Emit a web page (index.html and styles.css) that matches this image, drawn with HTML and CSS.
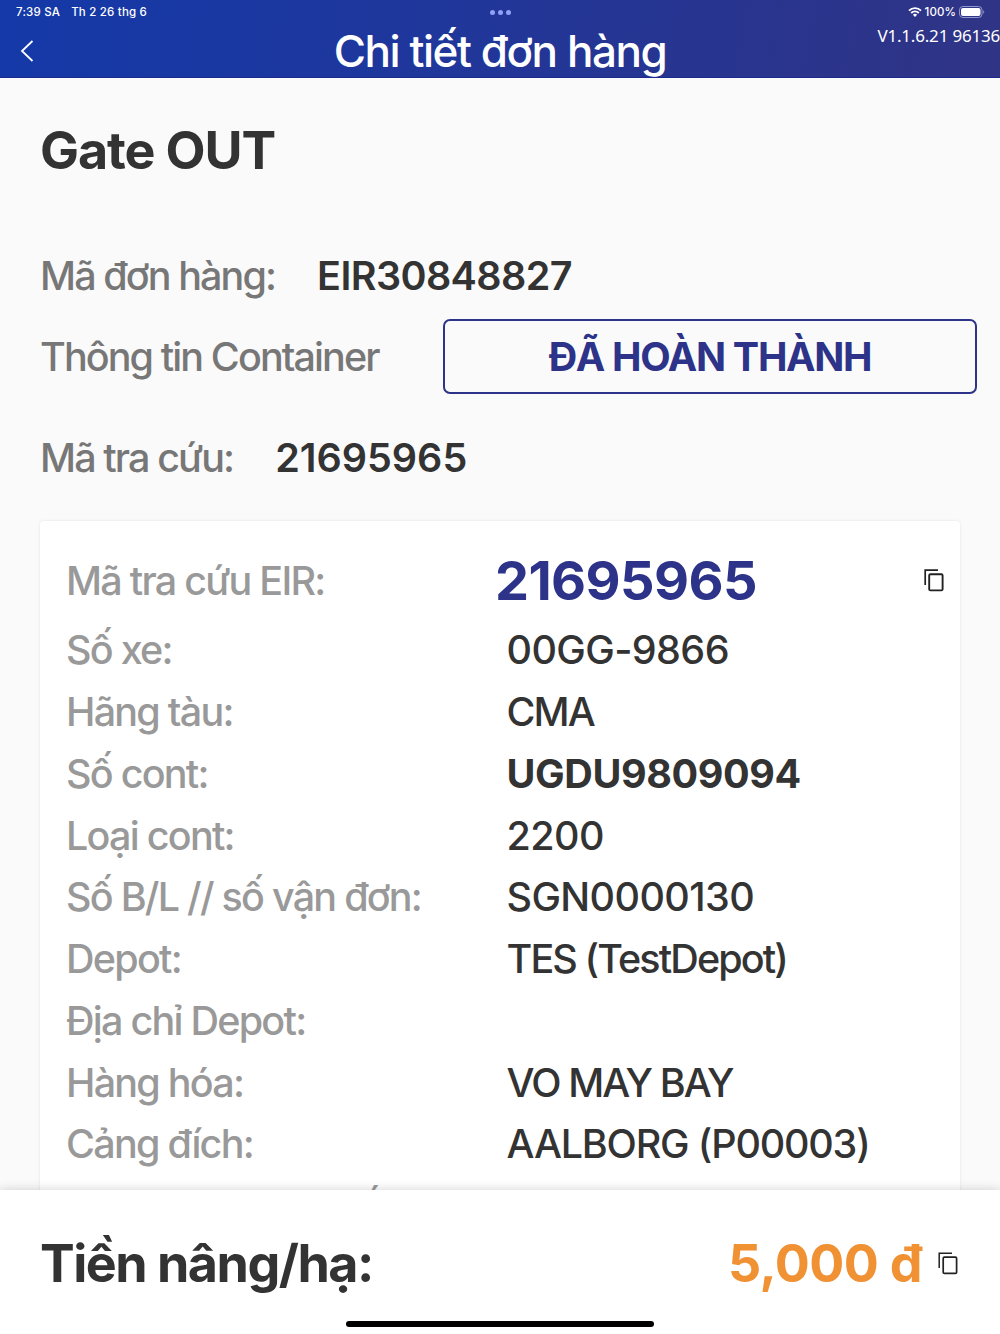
FILE: index.html
```html
<!DOCTYPE html>
<html lang="vi">
<head>
    <meta charset="UTF-8">
    <meta name="viewport" content="width=device-width, initial-scale=1.0">
    <title>Chi tiết đơn hàng</title>
    <link rel="stylesheet" href="styles.css">
</head>
<body>
    <header>
        <div class="status-bar">
            <div class="status-left">
                <span>7:39 SA</span>
                <span>Th 2 26 thg 6</span>
            </div>
            <div class="dots"><i></i><i></i><i></i></div>
            <div class="status-right">
                <svg class="wifi" viewBox="0 0 14 10" width="14" height="10">
                    <path d="M1 3.7a8.4 8.4 0 0 1 12 0M3.2 6a5.3 5.3 0 0 1 7.6 0" fill="none" stroke="#fff" stroke-width="1.8"/>
                    <path d="M4.9 7.7a3 3 0 0 1 4.2 0L7 9.9z" fill="#fff"/>
                </svg>
                <span class="percent">100%</span>
                <svg class="battery" viewBox="0 0 26 12" width="26" height="12">
                    <rect x=".5" y=".5" width="22.5" height="11" rx="3.4" fill="none" stroke="#8f96cc"/>
                    <rect x="2" y="2" width="19.5" height="8" rx="2" fill="#fff"/>
                    <path d="M24.2 4.2v3.6c1.4-.6 1.4-3 0-3.6z" fill="#8f96cc"/>
                </svg>
            </div>
        </div>
        <nav>
            <a href="#" class="back" aria-label="Quay lại">
                <svg viewBox="0 0 14 24" width="14" height="24">
                    <path d="M12.5 2L2 12l10.5 10" fill="none" stroke="#fff" stroke-width="1.8"/>
                </svg>
            </a>
            <h1>Chi tiết đơn hàng</h1>
            <span class="version">V1.1.6.21 96136</span>
        </nav>
    </header>

    <main>
        <h2>Gate OUT</h2>

        <div class="field order-code">
            <span class="label">Mã đơn hàng:</span>
            <strong>EIR30848827</strong>
        </div>
        <div class="field container-info">
            <span class="label">Thông tin Container</span>
            <button class="status-btn">ĐÃ HOÀN THÀNH</button>
        </div>
        <div class="field lookup-code">
            <span class="label">Mã tra cứu:</span>
            <strong>21695965</strong>
        </div>

        <section class="card">
            <div class="row row-main">
                <span class="key">Mã tra cứu EIR:</span>
                <span class="value">21695965</span>
                <svg class="copy" viewBox="0 0 20 23" width="20" height="23">
                    <path d="M1.2 16V1.2H14" fill="none" stroke="#222" stroke-width="1.7"/>
                    <rect x="5.2" y="5.2" width="13.4" height="16.2" rx="1.2" fill="none" stroke="#222" stroke-width="1.9"/>
                </svg>
            </div>
            <div class="row"><span class="key">Số xe:</span><span class="value">00GG-9866</span></div>
            <div class="row"><span class="key">Hãng tàu:</span><span class="value tight">CMA</span></div>
            <div class="row"><span class="key">Số cont:</span><span class="value bold">UGDU9809094</span></div>
            <div class="row"><span class="key">Loại cont:</span><span class="value">2200</span></div>
            <div class="row"><span class="key">Số B/L // số vận đơn:</span><span class="value">SGN0000130</span></div>
            <div class="row"><span class="key">Depot:</span><span class="value tight">TES (TestDepot)</span></div>
            <div class="row"><span class="key">Địa chỉ Depot:</span><span class="value"></span></div>
            <div class="row"><span class="key">Hàng hóa:</span><span class="value tight">VO MAY BAY</span></div>
            <div class="row"><span class="key">Cảng đích:</span><span class="value snug">AALBORG (P00003)</span></div>
            <div class="row"><span class="key">Ngày đăng ký cuối:</span><span class="value"></span></div>
        </section>
    </main>

    <footer>
        <div class="total">
            <span class="total-label">Tiền nâng/hạ:</span>
            <span class="price">5,000 đ</span>
            <svg class="copy" viewBox="0 0 20 23" width="20" height="23">
                <path d="M1.2 16V1.2H14" fill="none" stroke="#222" stroke-width="1.5"/>
                <rect x="5.2" y="5.2" width="13.4" height="16.2" rx="1.2" fill="none" stroke="#222" stroke-width="1.7"/>
            </svg>
        </div>
        <div class="home-bar"></div>
    </footer>
</body>
</html>
```

FILE: styles.css
```css
:root {
    --navy: #2c3389;
    --text: #333333;
    --muted: #777777;
    --light: #999999;
    --orange: #f09134;
}
* {
    box-sizing: border-box;
}
body {
    font-family: Inter, 'Liberation Sans', sans-serif;
    color: var(--text);
    background-color: #fafafa;
    margin: 0;
    height: 1334px;
    overflow: hidden;
    display: flex;
    flex-direction: column;
    white-space: nowrap;
}
header {
    flex: none;
    height: 78px;
    color: #fff;
    background: linear-gradient(100deg, #1439a8 0%, #1d379e 35%, #263592 65%, #303485 100%);
    border-bottom: 1px solid #1b2a8c;
}
.status-bar {
    display: grid;
    grid-template-columns: 1fr auto 1fr;
    align-items: center;
    height: 24px;
    padding: 0 15px 0 16px;
    font-size: 11.5px;
    font-weight: 500;
}
.status-left {
    display: flex;
    gap: 11px;
    letter-spacing: 0.2px;
}
.dots {
    display: flex;
    gap: 3px;
}
.dots i {
    width: 5px;
    height: 5px;
    border-radius: 50%;
    background: #8ea2f8;
}
.status-right {
    display: flex;
    justify-content: flex-end;
    align-items: center;
    gap: 3px;
}
.percent {
    letter-spacing: 0.1px;
}
nav {
    display: grid;
    grid-template-columns: 1fr auto 1fr;
    height: 53px;
}
.back {
    align-self: center;
    margin-left: 20px;
    height: 24px;
}
h1 {
    margin: 0;
    font-size: 44px;
    font-weight: 500;
    line-height: 54px;
    letter-spacing: -1.45px;
}
.version {
    justify-self: end;
    font-family: 'Noto Sans', sans-serif;
    font-size: 17px;
    line-height: 24px;
    letter-spacing: -0.2px;
}
main {
    flex: 1;
    min-height: 0;
    overflow: hidden;
    padding: 41px 40px 0;
}
h2 {
    margin: 0;
    font-size: 52px;
    font-weight: 700;
    line-height: 64px;
    letter-spacing: -1.1px;
}
.field {
    display: flex;
    align-items: center;
    font-size: 39.5px;
}
.field strong {
    font-weight: 600;
    letter-spacing: -0.6px;
    margin-left: 42px;
}
.label {
    color: var(--muted);
    font-weight: 450;
    letter-spacing: -1.9px;
}
.order-code {
    height: 60px;
    margin-top: 63px;
}
.container-info {
    height: 75px;
    margin-top: 13px;
    margin-right: -17px;
    justify-content: space-between;
}
.status-btn {
    width: 534px;
    height: 75px;
    padding: 0;
    border: 2px solid var(--navy);
    border-radius: 7px;
    background: none;
    color: var(--navy);
    font: 700 39.5px Inter, sans-serif;
    letter-spacing: -1.3px;
}
.lookup-code {
    height: 60px;
    margin-top: 34px;
}
.lookup-code strong {
    letter-spacing: 0;
}
.card {
    margin-top: 33px;
    padding: 21px 16px 0 26px;
    background: #fff;
    border-radius: 4px;
    box-shadow: 0 0 3px rgba(0,0,0,0.1);
}
.row {
    display: grid;
    grid-template-columns: 440.5px 1fr auto;
    align-items: center;
    height: 61.75px;
    font-size: 39.5px;
}
.row-main {
    grid-template-columns: 429px 1fr auto;
    height: 76px;
    margin-bottom: 1.5px;
}
.row-main .key {
    padding-top: 2px;
}
.row:last-child {
    padding-top: 4px;
}
.key {
    color: var(--light);
    font-weight: 500;
    letter-spacing: -1.75px;
}
.value {
    font-weight: 450;
    letter-spacing: -0.6px;
}
.value.tight {
    letter-spacing: -1.9px;
}
.value.snug {
    letter-spacing: -1.2px;
}
.value.bold {
    font-weight: 700;
    letter-spacing: -0.4px;
}
.row-main .value {
    color: var(--navy);
    font-size: 54px;
    font-weight: 700;
    letter-spacing: -0.6px;
}
footer {
    flex: none;
    height: 144px;
    background: #fff;
    box-shadow: 0 0 10px rgba(0,0,0,0.18);
    position: relative;
}
.total {
    display: flex;
    align-items: center;
    height: 131px;
    padding: 15px 42px 0 40px;
    font-size: 52px;
    font-weight: 700;
}
.total-label {
    flex: 1;
    letter-spacing: -1.5px;
}
.price {
    color: var(--orange);
    letter-spacing: -0.6px;
    margin-right: 16px;
}
.home-bar {
    width: 308px;
    height: 6px;
    margin: 0 auto;
    border-radius: 3px;
    background: #000;
}
```
